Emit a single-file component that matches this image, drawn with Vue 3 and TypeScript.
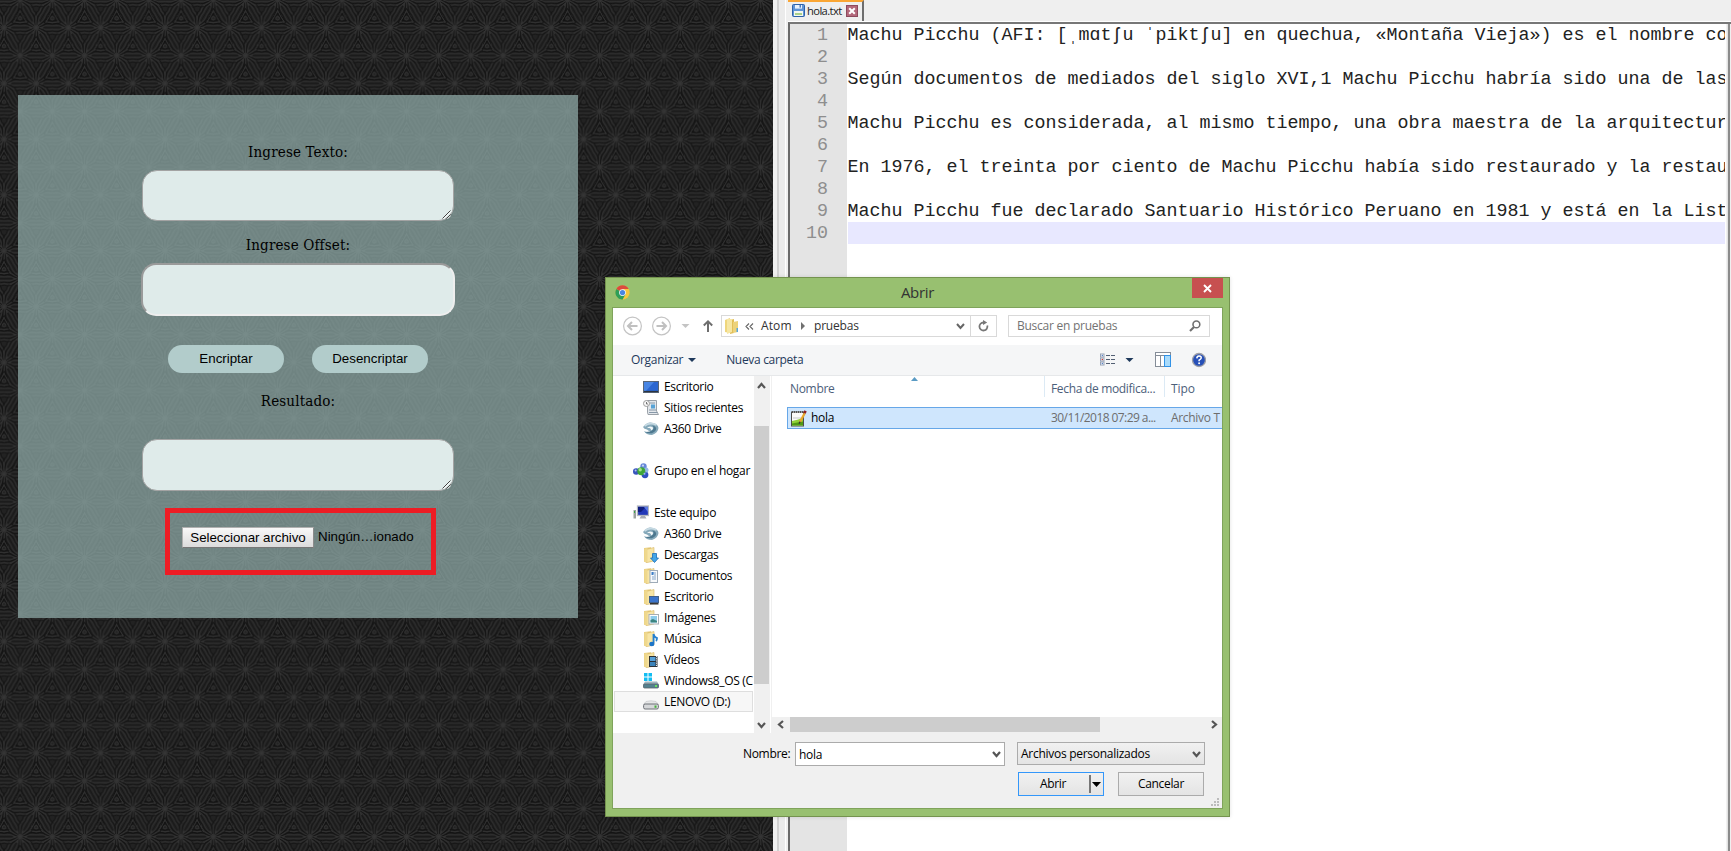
<script setup lang="ts">
interface TreeItem {
  label: string
  icon: string
  level: number
  selected?: boolean
}

const tree: TreeItem[] = [
  { label: 'Escritorio', icon: 'desktop', level: 2 },
  { label: 'Sitios recientes', icon: 'recent', level: 2 },
  { label: 'A360 Drive', icon: 'a360', level: 2 },
  { label: '', icon: '', level: 2 },
  { label: 'Grupo en el hogar', icon: 'homegroup', level: 1 },
  { label: '', icon: '', level: 2 },
  { label: 'Este equipo', icon: 'computer', level: 1 },
  { label: 'A360 Drive', icon: 'a360', level: 2 },
  { label: 'Descargas', icon: 'downloads', level: 2 },
  { label: 'Documentos', icon: 'documents', level: 2 },
  { label: 'Escritorio', icon: 'folderdesk', level: 2 },
  { label: 'Imágenes', icon: 'pictures', level: 2 },
  { label: 'Música', icon: 'music', level: 2 },
  { label: 'Vídeos', icon: 'videos', level: 2 },
  { label: 'Windows8_OS (C', icon: 'windrive', level: 2 },
  { label: 'LENOVO (D:)', icon: 'drive', level: 2, selected: true },
]

const folderIcons = ['downloads', 'documents', 'folderdesk', 'pictures', 'music', 'videos']

const lines: string[] = [
  'Machu Picchu (AFI: [ˌmɑtʃu ˈpiktʃu] en quechua, «Montaña Vieja») es el nombre co',
  '',
  'Según documentos de mediados del siglo XVI,1 Machu Picchu habría sido una de las',
  '',
  'Machu Picchu es considerada, al mismo tiempo, una obra maestra de la arquitectur',
  '',
  'En 1976, el treinta por ciento de Machu Picchu había sido restaurado y la restau',
  '',
  'Machu Picchu fue declarado Santuario Histórico Peruano en 1981 y está en la List',
  '',
]

// Star centres that touch one tile of the wallpaper (32.2 x 55.8)
const stars: [number, number][] = [
  [4, 27.6], [36.2, 27.6], [-28.2, 27.6],
  [20.1, -0.3], [-12.1, -0.3], [52.3, -0.3],
  [20.1, 55.5], [-12.1, 55.5], [52.3, 55.5],
  [4, 83.4], [4, -28.2], [36.2, -28.2], [36.2, 83.4],
]
const rays = [0, 60, 120, 180, 240, 300]
</script>

<template>
  <div class="screen">
    <section class="web">
      <svg class="wallpaper" width="773" height="851" aria-hidden="true">
        <defs>
          <pattern id="weave" width="32.2" height="55.8" patternUnits="userSpaceOnUse">
            <rect width="32.2" height="55.8" fill="#222" />
            <g v-for="(s, i) in stars" :key="i" :transform="`translate(${s[0]} ${s[1]})`" fill="none" stroke-width="0.9">
              <g v-for="a in rays" :key="a" :transform="`rotate(${a})`">
                <path d="M2 2Q9 9.5 16.1 6.500M2 -2Q9 -9.5 16.1 -6.500" stroke="#141414" />
                <path d="M1 .5Q9 7.2 16.1 4.900M1 -.5Q9 -7.2 16.1 -4.900" stroke="#303030" />
                <path d="M3 .5Q9 5.2 16.1 3.400M3 -.5Q9 -5.2 16.1 -3.400" stroke="#131313" />
                <path d="M4 .3Q9 3 16.1 1.900M4 -.3Q9 -3 16.1 -1.900" stroke="#303030" />
                <path d="M7 0H16.1" stroke="#161616" />
                <path d="M0 0H7" stroke="#353535" />
              </g>
              <g transform="translate(0 18.2)">
                <path d="M0 -9.5Q3 -2 8.2 5Q0 7 -8.2 5Q-3 -2 0 -9.5Z" stroke="#111" />
                <path d="M0 -7.3Q2.500 -1.5 6.3 3.9Q0 5.6 -6.3 3.9Q-2.500 -1.5 0 -7.3Z" stroke="#333" />
                <path d="M0 -5Q2 -1 4.3 2.7Q0 3.8 -4.3 2.7Q-2 -1 0 -5Z" stroke="#101010" />
                <circle r="1.7" cy="0.3" stroke="#343434" />
              </g>
            </g>
          </pattern>
        </defs>
        <rect width="773" height="851" fill="url(#weave)" />
      </svg>

      <main class="panel">
        <label class="lbl first">Ingrese Texto:</label>
        <div class="field area">
          <svg class="resize" width="9" height="9"><path d="M0.5 8.5L8.5 .5M4.5 8.5L8.5 4.5" stroke="#444" /><path d="M1.5 8.8L8.8 1.5M5.5 8.8L8.8 5.5" stroke="#fff" /></svg>
        </div>
        <label class="lbl second">Ingrese Offset:</label>
        <div class="field offset"></div>
        <div class="actions">
          <button class="pill">Encriptar</button>
          <button class="pill">Desencriptar</button>
        </div>
        <label class="lbl third">Resultado:</label>
        <div class="field area result">
          <svg class="resize" width="9" height="9"><path d="M0.5 8.5L8.5 .5M4.5 8.5L8.5 4.5" stroke="#444" /><path d="M1.5 8.8L8.8 1.5M5.5 8.8L8.8 5.5" stroke="#fff" /></svg>
        </div>
        <div class="marked">
          <button class="choose">Seleccionar archivo</button>
          <span class="chosen">Ningún…ionado</span>
        </div>
      </main>
    </section>

    <section class="npp">
      <div class="splitter"></div>
      <div class="editor">
        <div class="tabs">
          <div class="tab">
            <svg width="13" height="13" viewBox="0 0 13 13">
              <rect x=".5" y=".5" width="12" height="12" rx="1" fill="#5f94d6" stroke="#2f62a8" />
              <rect x="3" y="1" width="7" height="3.6" fill="#e9f2fb" /><rect x="7.5" y="1" width="1.5" height="2.6" fill="#4a7cc0" />
              <rect x="2" y="7" width="9" height="5" fill="#f4f8ee" /><rect x="3" y="9" width="7" height="2" fill="#a9d18a" />
            </svg>
            <span class="tabname">hola.txt</span>
            <svg width="12" height="12" viewBox="0 0 12 12">
              <rect x=".5" y=".5" width="11" height="11" fill="#b3677a" stroke="#8d4a5d" />
              <path d="M3.2 3.2L8.8 8.8M8.8 3.2L3.2 8.8" stroke="#fff" stroke-width="2" />
            </svg>
          </div>
        </div>
        <div class="doc">
          <div class="gutter"><div v-for="n in 10" :key="n">{{ n }}</div></div>
          <div class="code">
            <div v-for="(l, i) in lines" :key="i" class="line" :class="{ current: i === 9 }">{{ l }}</div>
          </div>
          <div class="edge"></div>
        </div>
      </div>
    </section>

    <section class="dialog">
      <header class="title">
        <svg class="chrome" width="15" height="15" viewBox="0 0 16 16">
          <circle cx="8" cy="8" r="7.6" fill="#f7c83c" />
          <path d="M8 8L1.4 4.2A7.6 7.6 0 0 1 14.6 4.2H8Z" fill="#dc4a3d" />
          <path d="M8 8L1.4 4.2A7.6 7.6 0 0 0 8 15.6L11.2 9.8Z" fill="#2f9e58" />
          <circle cx="8" cy="8" r="3.6" fill="#f4f7fb" /><circle cx="8" cy="8" r="2.8" fill="#4a86e0" />
        </svg>
        <span>Abrir</span>
        <div class="close"><svg width="9" height="9" viewBox="0 0 9 9"><path d="M1 1L8 8M8 1L1 8" stroke="#fff" stroke-width="1.9" /></svg></div>
      </header>
      <div class="body">
        <div class="nav">
          <svg class="arrows" width="108" height="22" viewBox="0 0 108 22" fill="none">
            <g stroke="#c4c4c4" stroke-width="1.2"><circle cx="19.5" cy="11" r="8.9" /><circle cx="48.5" cy="11" r="8.9" /></g>
            <path d="M24.5 11H15.5M19 7L15 11L19 15M43.500 11H52.500M49 7L53 11L49 15" stroke="#c0c0c0" stroke-width="2" />
            <path d="M68.500 9H76.500L72.500 13Z" fill="#c4c4c4" />
            <path d="M95 17V7M90.800 10.500L95 6.300L99.200 10.500" stroke="#6e6e6e" stroke-width="2" />
          </svg>
          <div class="address">
            <svg class="folder" width="14" height="17" viewBox="0 0 14 17">
              <path d="M0 2L5 0V15L0 14Z" fill="#efd67c" /><path d="M5 2L9 1V15L5 16Z" fill="#e2bf58" /><path d="M2 1H7V14L2 16Z" fill="#f6e6a3" /><path d="M8 4L13 3V14L8 15Z" fill="#ecd27a" /><rect x="11.500" y="10" width="1.500" height="4" fill="#58a6da" />
            </svg>
            <svg class="dbl" width="9" height="7" viewBox="0 0 9 7"><path d="M4 .5L1 3.500L4 6.500M8 .5L5 3.500L8 6.500" fill="none" stroke="#666" stroke-width="1.1" /></svg>
            <span class="atom">Atom</span>
            <svg class="tri" width="4" height="8"><path d="M0 0L4 4L0 8Z" fill="#707070" /></svg>
            <span class="grow pruebas">pruebas</span>
            <svg class="chev" width="9" height="7" viewBox="0 0 9 7"><path d="M1 1L4.500 5L8 1" fill="none" stroke="#666" stroke-width="2" /></svg>
            <div class="refresh"><svg width="11" height="12" viewBox="0 0 11 12"><path d="M5.500 2.500A4 4 0 1 0 9.300 5.500" fill="none" stroke="#777" stroke-width="1.800" /><path d="M5 0V5L9.200 2.500Z" fill="#777" /></svg></div>
          </div>
          <div class="search">
            <span>Buscar en pruebas</span>
            <svg width="12" height="12" viewBox="0 0 12 12"><circle cx="7.400" cy="4.400" r="3.400" fill="none" stroke="#707070" stroke-width="1.600" /><path d="M5 7L1 11" stroke="#707070" stroke-width="2.200" /></svg>
          </div>
        </div>

        <div class="toolbar">
          <span class="org">Organizar</span>
          <svg class="orgtri" width="8" height="4"><path d="M0 0H8L4 4Z" fill="#1e395b" /></svg>
          <span class="grow nueva">Nueva carpeta</span>
          <svg class="tools" width="106" height="16" viewBox="0 0 106 16">
            <g fill="#fff" stroke="#96a2b5"><rect x=".5" y="2" width="3.500" height="3" /><rect x=".5" y="6" width="3.500" height="3" /><rect x=".5" y="10" width="3.500" height="3" /></g>
            <path d="M6 3.500H15M6 7.500H15M6 11.500H15" stroke="#525f73" stroke-width="1" stroke-dasharray="4 1" />
            <circle cx="2.300" cy="3.500" r=".7" fill="#4b78c6" /><circle cx="2.300" cy="7.500" r=".8" fill="#c33" /><circle cx="2.300" cy="11.500" r=".7" fill="#4b78c6" />
            <path d="M25.500 6H33.500L29.500 10Z" fill="#1e395b" />
            <rect x="55.500" y=".5" width="15" height="14" fill="#fff" stroke="#858d98" /><path d="M55 3.500H71M60.500 4V14" stroke="#858d98" />
            <rect x="64.500" y="3.500" width="6" height="11" fill="#a9dbfb" stroke="#3292e6" />
            <circle cx="99" cy="8" r="6.500" fill="#2750b8" stroke="#9d9fa6" stroke-width="1.300" />
            <path d="M96.800 6.400Q97 4 99.200 4.100Q101.500 4.200 101.200 6.100Q100.900 7.200 99.100 8.200V9.200" fill="none" stroke="#fff" stroke-width="1.500" /><circle cx="99.100" cy="11.200" r="1" fill="#fff" />
          </svg>
        </div>

        <div class="panes">
          <div class="tree">
            <div v-for="(t, i) in tree" :key="i" class="node" :class="{ top: t.level === 1, selected: t.selected }">
              <svg width="16" height="16" viewBox="0 0 16 16">
                <template v-if="folderIcons.includes(t.icon)">
                  <path d="M1 1L8 .3V15L1 14.800Z" fill="#e6ca78" />
                  <path d="M3 2.500L11 .500V14L3 15.800Z" fill="#f7e5a6" stroke="#d7b765" stroke-width=".6" />
                  <path d="M1.200 1.500L4.500 1V15.300L1.200 14.800Z" fill="#efd88d" />
                </template>
                <template v-if="t.icon === 'desktop'">
                  <rect x=".5" y="2.500" width="15" height="11" fill="#2b66d0" stroke="#596676" />
                  <path d="M1 3H11L3 12H1Z" fill="#5c9af0" opacity=".6" /><path d="M1 12.500H15" stroke="#2c3440" stroke-width="1.200" />
                </template>
                <template v-else-if="t.icon === 'recent'">
                  <path d="M4.500 .5H13.500V11L15.500 14.500H5L4.500 12Z" fill="#e3e7eb" stroke="#9aa1a8" />
                  <path d="M7 3H12M6 10H13M6 12.500H14.500" stroke="#8798a8" /><rect x="8" y="4.500" width="4" height="4" fill="#58a3d6" />
                  <circle cx="3.500" cy="3.500" r="3" fill="#f7f7f7" stroke="#9b9b9b" /><path d="M3.500 2V4H5" fill="none" stroke="#555" stroke-width=".8" />
                </template>
                <template v-else-if="t.icon === 'a360'">
                  <path d="M1 5Q5 0 10 2Q15 3 15.500 7Q15 12 9 14Q3 14 1 10Q5 12 9 10Q6 11 4 8.500Q1 8 0 6Z" fill="#86a9ba" />
                  <path d="M2 11Q9 14.500 13 9Q14 5 9 4.500Q12 6.500 9.500 9Q7 11.500 2 11Z" fill="#4d788f" />
                  <path d="M4 7Q6 4.500 9.500 6Q11 8 8 9.500Q8.500 7.500 6.500 7Q5 6.800 4 7Z" fill="#f3f8fa" />
                  <path d="M1.500 5Q7 .5 13.500 4" stroke="#c7dae3" fill="none" stroke-width="1.800" />
                </template>
                <template v-else-if="t.icon === 'homegroup'">
                  <circle cx="10.500" cy="3.500" r="3.200" fill="#6788d8" /><circle cx="3.200" cy="8.500" r="3.200" fill="#3855bd" /><circle cx="12" cy="11.800" r="3.400" fill="#2f4fc0" /><circle cx="13" cy="7" r="2.500" fill="#93b8e6" />
                  <circle cx="8.300" cy="8.200" r="4" fill="#3ea53a" /><circle cx="7.200" cy="6.800" r="1.700" fill="#a3e18c" /><circle cx="10" cy="2.600" r="1.100" fill="#c6d6f7" /><circle cx="2.600" cy="7.400" r="1" fill="#b4c4f0" /><circle cx="11.500" cy="10.800" r="1" fill="#9db3f0" />
                </template>
                <template v-else-if="t.icon === 'computer'">
                  <rect x="4.500" y="1" width="11" height="9.500" fill="#2238b8" stroke="#b4b8bf" stroke-width="1.300" /><path d="M5 2H13L8 7H5Z" fill="#101e80" /><path d="M11 2H15V7Z" fill="#5c7be4" />
                  <path d="M8 11H12L13.500 13.500H6.500Z" fill="#a9adb3" /><rect x=".5" y="5" width="2.500" height="8.500" fill="#9ba19f" /><rect x="1" y="6" width="1" height="2" fill="#39a545" />
                </template>
                <template v-else-if="t.icon === 'downloads'"><path d="M9.500 6.500H13.500V11H15.500L11.500 15.500L7.500 11H9.500Z" fill="#43a5e8" stroke="#1c6fb6" stroke-width=".8" /></template>
                <template v-else-if="t.icon === 'documents'"><rect x="7" y="2.500" width="7.500" height="12" fill="#f8fafc" stroke="#9eabb8" /><path d="M9 5H13M11 7H13M9 9H13M9 11H13" stroke="#83a4c8" /><rect x="8.500" y="4" width="2" height="3" fill="#3c7fc9" /></template>
                <template v-else-if="t.icon === 'folderdesk'"><rect x="6.500" y="7.500" width="9" height="6" fill="#3a74cc" stroke="#41618c" /><path d="M7 14.800H15.500" stroke="#222" stroke-width="1.400" /></template>
                <template v-else-if="t.icon === 'pictures'"><rect x="6" y="4.500" width="9.500" height="9.500" fill="#fff" stroke="#a6adb3" /><rect x="7.500" y="6" width="6.500" height="6.500" fill="#8ccbea" /><path d="M7.500 12.500V10L10 9L14 11V12.500Z" fill="#3d8581" /></template>
                <template v-else-if="t.icon === 'music'"><path d="M10.500 3V12.500M10.500 3Q11 6 14 7Q14 9 13 10" fill="none" stroke="#2580d0" stroke-width="1.800" /><ellipse cx="8.800" cy="13" rx="2.600" ry="2.200" fill="#1c74c8" /></template>
                <template v-else-if="t.icon === 'videos'"><rect x="6" y="4" width="8.500" height="11" fill="#2d3136" /><rect x="7" y="5" width="5.500" height="4" fill="#55a0d8" /><rect x="7" y="10" width="5.500" height="4" fill="#3b83ba" /><path d="M13.500 4V15" stroke="#e8e8e8" stroke-dasharray="1.200 1" /></template>
                <template v-else-if="t.icon === 'windrive'">
                  <path d="M1 0H4.500V3.500H1ZM5.500 0H9V3.500H5.500ZM1 4.500H4.500V8H1ZM5.500 4.500H9V8H5.500Z" fill="#12bdf2" />
                  <path d="M2 8.500H14L15.500 11V14.500H.5V11Z" fill="#9fb4bd" /><rect x=".5" y="11" width="15" height="4" rx="1" fill="#54818f" stroke="#5b656d" stroke-width=".8" /><rect x="12" y="12" width="2" height="2" fill="#6be05f" />
                </template>
                <template v-else-if="t.icon === 'drive'">
                  <path d="M3 7.500Q8 6 13 7.500L15.500 10.500H.5Z" fill="#e6e7e8" stroke="#c3c5c8" stroke-width=".6" /><rect x=".6" y="10" width="14.800" height="5" rx="1.500" fill="#d5d7d9" stroke="#6e7278" stroke-width="1" /><rect x="11.500" y="11.500" width="2" height="2.300" fill="#46b13c" />
                </template>
              </svg>
              <span>{{ t.label }}</span>
            </div>
          </div>
          <div class="vscroll">
            <svg class="up" width="9" height="7" viewBox="0 0 9 7"><path d="M1 6L4.500 2L8 6" fill="none" stroke="#555" stroke-width="2.200" /></svg>
            <div class="vthumb"></div>
            <svg class="down" width="9" height="7" viewBox="0 0 9 7"><path d="M1 1L4.500 5L8 1" fill="none" stroke="#555" stroke-width="2.200" /></svg>
          </div>
          <div class="files">
            <div class="head">
              <span class="c1">Nombre</span><span class="c2">Fecha de modifica...</span><span class="c3">Tipo</span>
              <svg class="sort" width="7" height="4"><path d="M0 4L3.500 0L7 4Z" fill="#5a9bc4" /></svg>
            </div>
            <div class="row">
              <svg width="17" height="17" viewBox="0 0 17 17">
                <rect x="1.500" y="2" width="12" height="14" fill="#fafafa" stroke="#4c4c4c" /><path d="M3 8H11" stroke="#c4c8cc" /><path d="M2 11Q7 10 13 8V15.500H2Z" fill="#8fd13a" /><path d="M2 13.500L13 11.500V15.500H2Z" fill="#4f9a14" />
                <path d="M2 2H13" stroke="#555" stroke-width="2" stroke-dasharray="1 1" /><path d="M14.800 3L10 12" stroke="#e8a72f" stroke-width="2.300" /><path d="M15.600 .8L14.400 3.200" stroke="#8e2024" stroke-width="2.600" /><path d="M10.200 11.600L9 13.800" stroke="#333" stroke-width="1.200" />
              </svg>
              <span class="name">hola</span><span class="date">30/11/2018 07:29 a...</span><span class="kind">Archivo T</span>
            </div>
            <div class="hscroll">
              <svg class="l" width="7" height="9" viewBox="0 0 7 9"><path d="M6 1L2 4.500L6 8" fill="none" stroke="#555" stroke-width="2.200" /></svg>
              <div class="hthumb"></div>
              <svg class="r" width="7" height="9" viewBox="0 0 7 9"><path d="M1 1L5 4.500L1 8" fill="none" stroke="#555" stroke-width="2.200" /></svg>
            </div>
          </div>
        </div>

        <footer class="foot">
          <div class="frow">
            <span class="flabel">Nombre:</span>
            <div class="combo"><span>hola</span><svg width="9" height="7" viewBox="0 0 9 7"><path d="M1 1L4.500 5L8 1" fill="none" stroke="#555" stroke-width="2.200" /></svg></div>
            <div class="combo filter"><span>Archivos personalizados</span><svg width="9" height="7" viewBox="0 0 9 7"><path d="M1 1L4.500 5L8 1" fill="none" stroke="#555" stroke-width="2.200" /></svg></div>
          </div>
          <div class="brow">
            <div class="btn open"><span>Abrir</span><i></i><svg width="9" height="5"><path d="M0 0H9L4.500 5Z" fill="#000" /></svg></div>
            <div class="btn">Cancelar</div>
          </div>
          <svg class="grip" width="9" height="9" fill="#bcbcbc"><path d="M6 0h2v2h-2zM3 3h2v2h-2zM6 3h2v2h-2zM0 6h2v2h-2zM3 6h2v2h-2zM6 6h2v2h-2z" /></svg>
        </footer>
      </div>
    </section>
  </div>
</template>

<style>
html, body { margin: 0; overflow: hidden; }
</style>

<style scoped>
* { box-sizing: border-box; }
svg { display: block; flex: none; }
.screen { position: relative; display: flex; width: 1731px; height: 851px; overflow: hidden; background: #fff; }

.web { position: relative; width: 773px; height: 851px; flex: none; padding: 95px 0 0 18px; background: #202020; }
.wallpaper { position: absolute; left: 0; top: 0; }
.panel { position: relative; width: 560px; height: 523px; background: rgba(146, 173, 170, 0.72); display: flex; flex-direction: column; align-items: center; }
.lbl { font: 15px/20px "DejaVu Serif Condensed", "DejaVu Serif", serif; font-stretch: condensed; letter-spacing: .15px; color: #000; height: 20px; white-space: nowrap; }
.first { margin-top: 47px; }
.second { margin-top: 14px; }
.third { margin-top: 18px; }
.field { background: #dfebea; border-radius: 15px; }
.area { position: relative; width: 312px; height: 51px; margin-top: 8px; border: 1px solid #a3a3a3; }
.resize { position: absolute; right: 2px; bottom: 1px; }
.offset { width: 314px; height: 53px; margin-top: 8px; border: 2px solid; border-color: #9a9a9a #eee #eee #9a9a9a; }
.actions { display: flex; gap: 28px; margin-top: 29px; }
.pill { width: 116px; height: 28px; border: 0; border-radius: 14px; background: #b2cccb; font: 13.333px "Liberation Sans", Arial, sans-serif; color: #000; padding: 0 0 1px; }
.result { margin-top: 28px; height: 52px; }
.marked { width: 271px; height: 67px; margin: 17px 0 0 5px; border: 5px solid #ed1c24; display: flex; align-items: flex-start; padding: 14px 0 0 12px; font: 13.333px/20px "Liberation Sans", Arial, sans-serif; }
.choose { width: 132px; height: 21px; padding: 0; border: 1px solid #8f8f8f; border-color: #b0b0b0 #8b8b8b #777 #b0b0b0; background: linear-gradient(#f8f8f8, #dcdcdc); font: 13.333px/18px "Liberation Sans", Arial, sans-serif; letter-spacing: -.05px; color: #000; white-space: nowrap; }
.chosen { margin-left: 4px; white-space: nowrap; }

.npp { display: flex; width: 958px; height: 851px; background: #efefef; }
.splitter { width: 13px; margin-right: 2px; background: linear-gradient(90deg, #efefef 4px, #d0d0d0 4px 6px, #ebebeb 6px 12px, #fff 12px); }
.editor { flex: 1; display: flex; flex-direction: column; min-width: 0; }
.tabs { height: 22px; border-bottom: 1px solid #fff; }
.tab { width: 76px; height: 21px; border-top: 2px solid #faa634; border-right: 2px solid #6e6e6e; display: flex; align-items: center; padding: 0 0 2px 4px; }
.tab svg:last-child { margin-left: auto; margin-right: 4px; }
.tabname { margin-left: 2px; font: 11.200px "Open Sans", sans-serif; letter-spacing: -.6px; color: #222; }
.doc { flex: 1; display: flex; min-height: 0; border-top: 2px solid #6a6a6a; border-left: 2px solid #6a6a6a; border-top-color: #777; background: #fff; font: 18.333px/22px "Liberation Mono", "Courier New", monospace; }
.gutter { width: 57px; flex: none; background: #e4e4e4; color: #8e8e8e; text-align: right; padding: 1px 19px 0 0; }
.code { flex: 1; min-width: 0; color: #222; }
.line { height: 22px; white-space: pre; line-height: 24px; padding-left: .5px; }
.current { background: #e8e8ff; margin-left: 1px; }
.edge { width: 6px; flex: none; background: linear-gradient(90deg, #fff 1px, #e3e3e3 2px 3px, #8b8b8b 3px 5px, #efefef 5px); }

.dialog { position: absolute; left: 605px; top: 277px; width: 625px; height: 540px; background: #98c070; border: 1px solid #74934f; padding: 0 6px 7px; font: 12px/16px "Open Sans", "Noto Sans", sans-serif; letter-spacing: -.32px; color: #000; box-shadow: 0 0 4px rgba(0, 0, 0, .12); display: flex; flex-direction: column; }
.dialog span { white-space: nowrap; }
.title { position: relative; height: 29px; flex: none; display: flex; justify-content: center; align-items: center; padding-bottom: 2px; font-size: 15px; color: #333; letter-spacing: -.3px; }
.chrome { position: absolute; left: 3px; top: 7px; }
.close { position: absolute; right: 0; top: 0; width: 31px; height: 20px; background: #c75050; display: flex; align-items: center; justify-content: center; }
.body { flex: 1; border: 1px solid #7fa35b; background: #fff; display: flex; flex-direction: column; min-height: 0; }
.nav { height: 37px; display: flex; align-items: flex-start; padding-top: 7px; flex: none; }
.address { width: 276px; height: 22px; border: 1px solid #d9d9d9; display: flex; align-items: center; color: #333; padding-left: 3px; }
.dbl { margin-left: 6px; }
.atom { margin-left: 7px; width: 40px; letter-spacing: .1px; }
.tri { margin-right: 9px; }
.pruebas { letter-spacing: -.2px; }
.grow { flex: 1; }
.chev { margin-right: 5px; }
.refresh { width: 26px; height: 20px; border-left: 1px solid #d9d9d9; display: flex; align-items: center; justify-content: center; padding-right: 1px; }
.search { width: 202px; height: 22px; margin-left: 11px; border: 1px solid #d9d9d9; display: flex; align-items: center; justify-content: space-between; padding: 0 8px; color: #737373; letter-spacing: -.25px; }
.toolbar { height: 31px; flex: none; background: #f5f6f7; border-bottom: 1px solid #e6e8ea; display: flex; align-items: center; color: #1e395b; padding: 0 16px 0 18px; }
.orgtri { margin: 0 30px 0 5px; }
.panes { height: 357px; flex: none; display: flex; min-height: 0; }
.tree { width: 141px; overflow: hidden; flex: none; }
.node { height: 21px; display: flex; align-items: center; gap: 5px; padding-left: 30px; white-space: nowrap; }
.node.top { padding-left: 20px; }
.node.selected { margin: 0 1px; padding-left: 28px; background: #f7f7f7; border: 1px solid #dedede; }
.vscroll { width: 16px; flex: none; background: #f0f0f0; display: flex; flex-direction: column; align-items: flex-start; }
.up { margin: 6px 0 0 3px; }
.vthumb { width: 15px; height: 258px; margin-top: 37px; background: #cdcdcd; }
.down { margin: 38px 0 0 3px; }
.files { flex: 1; min-width: 0; display: flex; flex-direction: column; border-left: 1px solid #f0f0f0; margin-left: 1px; overflow: hidden; }
.head { position: relative; height: 31px; flex: none; display: flex; color: #4c607a; line-height: 26px; padding-left: 18px; }
.c1 { width: 254px; }
.c2 { width: 120px; border-left: 1px solid #dceaf5; padding-left: 6px; height: 21px; }
.c3 { border-left: 1px solid #dceaf5; padding-left: 6px; height: 21px; letter-spacing: -.1px; }
.sort { position: absolute; left: 139px; top: 1px; }
.row { height: 22px; flex: none; width: 460px; margin-left: 15px; background: #cfe6fd; border: 1px solid #66a7e8; display: flex; align-items: center; padding-left: 2px; color: #6d6d6d; }
.name { width: 240px; margin-left: 4px; color: #000; }
.date { width: 120px; letter-spacing: -.57px; }
.hscroll { margin-top: auto; height: 16px; background: #f0f0f0; display: flex; align-items: center; padding-bottom: 1px; }
.l { margin-left: 5px; }
.hthumb { width: 310px; height: 15px; margin-left: 6px; background: #cdcdcd; }
.r { margin-left: auto; margin-right: 4px; }
.foot { position: relative; flex: 1; background: #f0f0f0; padding-top: 9px; }
.frow { display: flex; height: 24px; padding-left: 130px; }
.flabel { width: 52px; line-height: 23px; }
.combo { width: 210px; height: 24px; background: #fff; border: 1px solid #ababab; display: flex; align-items: center; justify-content: space-between; padding: 1px 3px 0 3px; }
.filter { width: 188px; height: 23px; margin-left: 12px; letter-spacing: -.28px; background: linear-gradient(#f1f1f1, #e4e4e4); }
.brow { display: flex; gap: 14px; margin-top: 6px; padding-left: 405px; }
.btn { width: 86px; height: 24px; border: 1px solid #ababab; background: linear-gradient(#f1f1f1, #e4e4e4); display: flex; align-items: center; justify-content: center; }
.open { border-color: #3397fa; justify-content: flex-start; padding-left: 21px; }
.open i { width: 2px; height: 18px; background: #777; margin-left: auto; margin-right: 1px; }
.open svg { margin-right: 2px; }
.grip { position: absolute; right: 2px; bottom: 1px; }
</style>
